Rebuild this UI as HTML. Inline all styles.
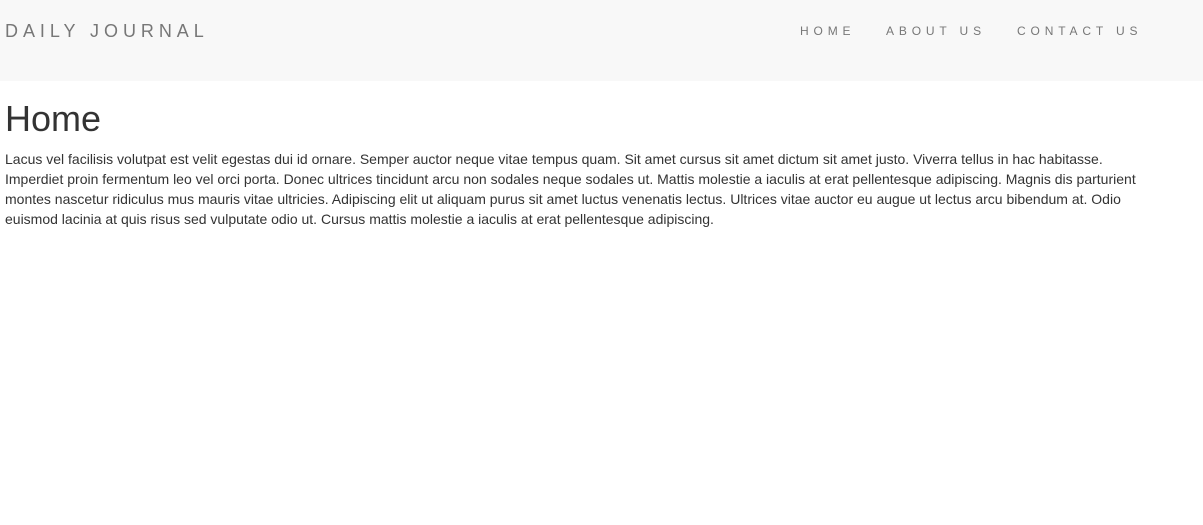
<!DOCTYPE html>
<html><head><style>
body{margin:0;font-family:"Liberation Sans",sans-serif;background:#fff;}
.nav{height:81px;background:#f8f8f8;position:relative;}
.brand{position:absolute;left:5px;top:21px;font-size:18px;letter-spacing:4.95px;color:#777;}
.links{position:absolute;top:24px;font-size:12px;letter-spacing:4.85px;color:#777;}
.links span{position:absolute;white-space:nowrap;}
.c{padding:0 5px;}
h1{font-size:36px;font-weight:500;color:#333;margin:18px 0 10px;line-height:40px;}
p{font-size:14px;line-height:20px;color:#333;margin:0;width:1150px;}
</style></head><body>
<div class="nav"><div class="brand">DAILY JOURNAL</div>
<div class="links"><span style="left:800px">HOME</span><span style="left:886px">ABOUT US</span><span style="left:1017px">CONTACT US</span></div></div>
<div class="c"><h1>Home</h1>
<p>Lacus vel facilisis volutpat est velit egestas dui id ornare. Semper auctor neque vitae tempus quam. Sit amet cursus sit amet dictum sit amet justo. Viverra tellus in hac habitasse. Imperdiet proin fermentum leo vel orci porta. Donec ultrices tincidunt arcu non sodales neque sodales ut. Mattis molestie a iaculis at erat pellentesque adipiscing. Magnis dis parturient montes nascetur ridiculus mus mauris vitae ultricies. Adipiscing elit ut aliquam purus sit amet luctus venenatis lectus. Ultrices vitae auctor eu augue ut lectus arcu bibendum at. Odio euismod lacinia at quis risus sed vulputate odio ut. Cursus mattis molestie a iaculis at erat pellentesque adipiscing.</p></div>
</body></html>
